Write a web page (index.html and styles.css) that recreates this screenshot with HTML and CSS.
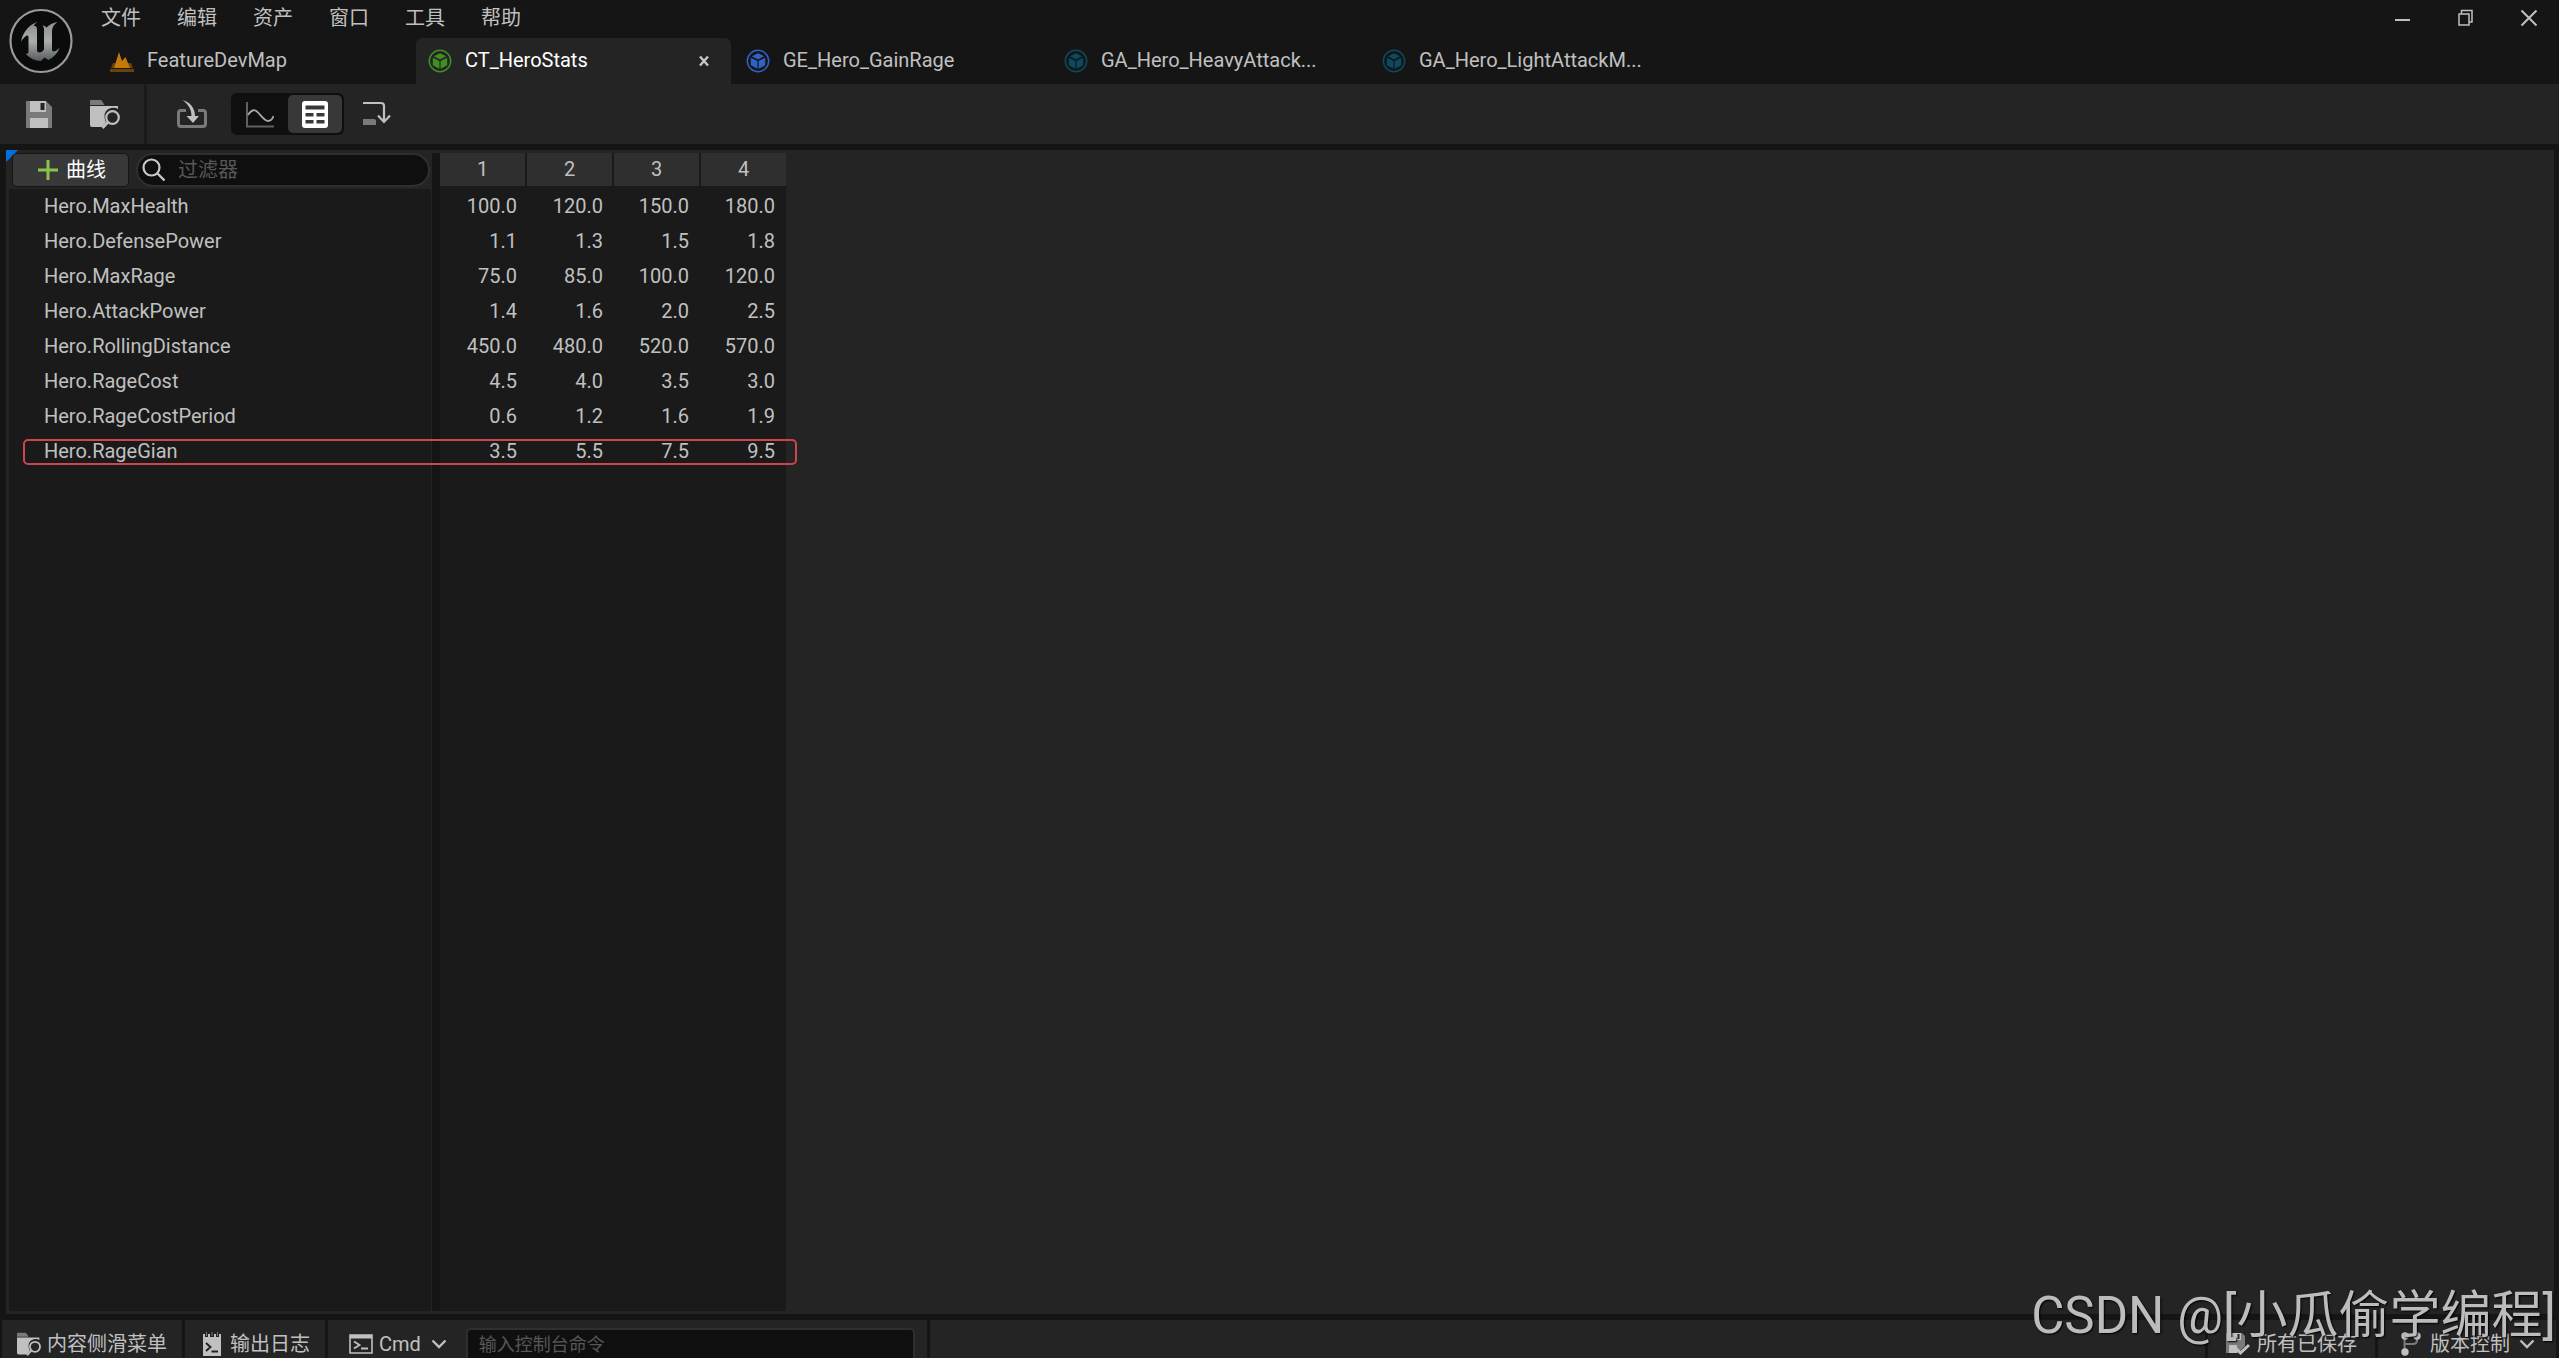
FILE: index.html
```html
<!DOCTYPE html>
<html lang="zh-CN">
<head>
<meta charset="utf-8">
<title>CT_HeroStats</title>
<link rel="stylesheet" href="styles.css">
</head>
<body>
<svg class="defs" width="0" height="0" aria-hidden="true">
  <symbol id="asset" viewBox="0 0 24 24">
    <circle cx="12" cy="12" r="10.7" fill="none" stroke="currentColor" stroke-width="1.5"/>
    <path fill="currentColor" d="M12 4.2 18.200 7.2 12 10.400 5.800 7.2zM4.800 8.7 11.400 12V19.800L4.800 16.300zM19.200 8.7 12.600 12V19.800L19.200 16.300z"/>
  </symbol>
  <symbol id="folder" viewBox="0 0 30 30">
    <path fill="#7a7a7a" d="M0 6V2Q0 1 1 1H10.500Q11.500 1 12 2L14.500 6z"/>
    <path fill="#c0c0c0" d="M0 7H28V10Q25 8 21 9Q14 11 14.500 18Q14.700 21 16 23L12 28H2Q0 28 0 26z"/>
    <circle cx="22.500" cy="18.500" r="6.300" fill="none" stroke="#c0c0c0" stroke-width="2.200"/>
    <path stroke="#c0c0c0" stroke-width="2.600" d="M18 23 12.500 29"/>
  </symbol>
  <symbol id="chevron" viewBox="0 0 16 10">
    <path fill="none" stroke="#c0c0c0" stroke-width="2.400" d="M1.500 1.500 8 8 14.500 1.500"/>
  </symbol>
</svg>

<div class="window">
  <header class="titlebar">
    <svg class="logo" viewBox="0 0 64 66" aria-label="Unreal Engine">
      <defs><linearGradient id="metal" x1="0" y1="0" x2="0" y2="1"><stop offset="0" stop-color="#8b8f90"/><stop offset=".5" stop-color="#a9adae"/><stop offset="1" stop-color="#555c5e"/></linearGradient></defs>
      <ellipse cx="32" cy="33" rx="30.500" ry="31" fill="#0b0b0b" stroke="#9a9a9a" stroke-width="2.200"/>
      <path fill="url(#metal)" d="M28.500 14C21 16 13.500 24 12 34C14 30 17 27.500 18.500 27.500Q19.500 27.500 19.500 29.500V44Q19.500 46.500 16.500 45.500C20 50 26 53 32 53L35.500 49.500 39.500 52C44 50 49 45 50.500 39.500C48.500 42 46 43.500 44.500 43.500Q43 43.500 43 41.500V23C43 19 45.500 16 48.500 14C44 14.500 40 17 37.500 19.500Q36 17.500 33.500 17.500Q35 19 35 21V41.500Q33 44.500 30.500 44.500Q28 44.500 28 42V21.500Q28 19.500 27 18.500Q25.500 17.500 24.500 18Q25.500 15.500 28.500 14z"/>
    </svg>
    <div class="title-main">
      <div class="menu-row">
        <nav class="menus">
          <button>文件</button><button>编辑</button><button>资产</button><button>窗口</button><button>工具</button><button>帮助</button>
        </nav>
        <div class="window-controls">
          <button aria-label="最小化"><svg width="18" height="18"><path stroke="#c0c0c0" stroke-width="2" d="M1 11H16"/></svg></button>
          <button aria-label="还原"><svg width="18" height="18"><path fill="none" stroke="#c0c0c0" stroke-width="1.500" d="M2 5H12V16H2zM4.500 5V1.500H15V13H12"/></svg></button>
          <button aria-label="关闭"><svg width="18" height="18"><path stroke="#c0c0c0" stroke-width="2" d="M1.500 1.500 16.500 16.500M16.500 1.500 1.500 16.500"/></svg></button>
        </div>
      </div>
      <div class="tabs" role="tablist">
        <button class="tab" role="tab"><svg class="tab-icon" viewBox="0 0 24 24"><path fill="#6b4208" d="M3 14 1 19H23L21 14zM0 20H24V23H0z"/><path fill="#c47a08" d="M4 19 9 3 12 12 15.500 8 20 19z"/></svg><span>FeatureDevMap</span></button>
        <button class="tab active" role="tab" aria-selected="true"><svg class="tab-icon green"><use href="#asset"/></svg><span>CT_HeroStats</span><svg class="tab-close" viewBox="0 0 10 12"><path stroke="#c8c8c8" stroke-width="2.400" d="M1 1.500 9 10.500M9 1.500 1 10.500"/></svg></button>
        <button class="tab" role="tab"><svg class="tab-icon blue"><use href="#asset"/></svg><span>GE_Hero_GainRage</span></button>
        <button class="tab" role="tab"><svg class="tab-icon teal"><use href="#asset"/></svg><span>GA_Hero_HeavyAttack...</span></button>
        <button class="tab" role="tab"><svg class="tab-icon teal"><use href="#asset"/></svg><span>GA_Hero_LightAttackM...</span></button>
      </div>
    </div>
  </header>

  <div class="toolbar">
    <div class="tool-group files">
      <button aria-label="保存"><svg width="26" height="28" viewBox="0 0 26 28"><path fill="#7a7a7a" d="M0 1H20L26 7V28H0z"/><path fill="#c0c0c0" d="M4 1H20V12H4z"/><path fill="#242424" d="M14.500 3H18.500V10H14.500z"/><path fill="#c0c0c0" d="M4 18H22V28H4z"/></svg></button>
      <button aria-label="浏览"><svg width="30" height="30"><use href="#folder"/></svg></button>
    </div>
    <div class="tool-group">
      <button aria-label="重新导入"><svg width="30" height="28" viewBox="0 0 30 28"><path fill="none" stroke="#7a7a7a" stroke-width="3" d="M9 10.500H4Q1.500 10.500 1.500 13V23.500Q1.500 26.500 4 26.500H26Q28.500 26.500 28.500 23.500V13Q28.500 10.500 26 10.500H21"/><path fill="#c0c0c0" d="M5.500 0C13 2 18 8 18 16H22L16 23 9.500 16H14.500C14.500 9 11 4 5.500 0z"/></svg></button>
      <div class="view-switch">
        <button aria-label="曲线视图"><svg width="28" height="27" viewBox="0 0 28 27"><path fill="none" stroke="#606060" stroke-width="2" d="M1 1V25.500H28"/><path fill="none" stroke="#a8a8a8" stroke-width="1.800" d="M2 14C6 8 9 8 12.500 12C17 17 19 20 22 20C25 20 26.500 18 27.500 15"/></svg></button>
        <button class="on" aria-label="表格视图"><svg width="26" height="27" viewBox="0 0 26 27"><path fill="#fff" fill-rule="evenodd" d="M3 0H23Q26 0 26 3V24Q26 27 23 27H3Q0 27 0 24V3Q0 0 3 0zM3.500 4.500V8.500H22.500V4.500zM3.500 12V15.500H11.500V12zM14.500 12V15.500H22.500V12zM3.500 19V22.500H11.500V19zM14.500 19V22.500H22.500V19z"/></svg></button>
      </div>
      <button aria-label="追加"><svg width="28" height="26" viewBox="0 0 28 26"><path fill="#7a7a7a" d="M0 18H11Q13 18 13 20V24H0z"/><path fill="none" stroke="#c0c0c0" stroke-width="2.200" d="M0 2H18Q21 2 21 5V21M15 14.500 21 21 27 14.500"/></svg></button>
    </div>
  </div>

  <main class="panel">
    <section class="curves">
      <div class="curve-tools">
        <button class="add"><svg width="20" height="20"><path stroke="#8bc34a" stroke-width="3" d="M10 0V20M0 10H20"/></svg>曲线</button>
        <label class="search"><svg width="24" height="24" viewBox="0 0 24 24"><circle cx="9.500" cy="9.500" r="8" fill="none" stroke="#c8c8c8" stroke-width="2.200"/><path stroke="#c8c8c8" stroke-width="2.400" d="M15 15 22.500 22.500"/></svg><input type="text" placeholder="过滤器" aria-label="过滤器"></label>
      </div>
      <ul class="names">
        <li>Hero.MaxHealth</li><li>Hero.DefensePower</li><li>Hero.MaxRage</li><li>Hero.AttackPower</li><li>Hero.RollingDistance</li><li>Hero.RageCost</li><li>Hero.RageCostPeriod</li><li>Hero.RageGian</li>
      </ul>
    </section>
    <div class="splitter"></div>
    <table class="values">
      <thead><tr><th>1</th><th>2</th><th>3</th><th>4</th></tr></thead>
      <tbody>
        <tr><td>100.0</td><td>120.0</td><td>150.0</td><td>180.0</td></tr>
        <tr><td>1.1</td><td>1.3</td><td>1.5</td><td>1.8</td></tr>
        <tr><td>75.0</td><td>85.0</td><td>100.0</td><td>120.0</td></tr>
        <tr><td>1.4</td><td>1.6</td><td>2.0</td><td>2.5</td></tr>
        <tr><td>450.0</td><td>480.0</td><td>520.0</td><td>570.0</td></tr>
        <tr><td>4.5</td><td>4.0</td><td>3.5</td><td>3.0</td></tr>
        <tr><td>0.6</td><td>1.2</td><td>1.6</td><td>1.9</td></tr>
        <tr><td>3.5</td><td>5.5</td><td>7.5</td><td>9.5</td></tr>
      </tbody>
    </table>
    <div class="corner"></div>
    <div class="highlight"></div>
  </main>

  <footer class="statusbar">
    <button class="cell drawer"><svg width="24" height="24"><use href="#folder"/></svg>内容侧滑菜单</button>
    <button class="cell log"><svg width="18" height="24" viewBox="0 0 18 24"><path fill="#c0c0c0" d="M0 2H2V5H5V2H7V5H11V2H13V5H16V2H18V24H0z"/><path fill="#7a7a7a" d="M3 0H4V4H3zM8.500 0H9.500V4H8.500zM14 0H15V4H14z"/><path fill="none" stroke="#242424" stroke-width="2" d="M3 11 7.500 15 3 19M8.500 19.500H15"/></svg>输出日志</button>
    <div class="cell console">
      <button><svg width="24" height="20" viewBox="0 0 24 20"><path fill="none" stroke="#c0c0c0" stroke-width="1.600" d="M1 1H23V19H1z"/><path fill="#c0c0c0" d="M1 1H23V4.500H1z"/><path fill="none" stroke="#c0c0c0" stroke-width="1.800" d="M5 7.500 10.500 11 5 14.500M12 14.500H19"/></svg>Cmd<svg class="drop" width="16" height="10"><use href="#chevron"/></svg></button>
      <input type="text" placeholder="输入控制台命令" aria-label="输入控制台命令">
    </div>
    <div class="cell fill"></div>
    <button class="cell saved"><svg width="24" height="24" viewBox="0 0 24 24"><path fill="#7a7a7a" d="M0 1H16L19 4V14L12 21H0z"/><path fill="#c0c0c0" d="M3 1H15V8H3zM3 13H11V21H3z"/><path fill="#242424" d="M11.500 2H13.500V7H11.500z"/><path fill="none" stroke="#c0c0c0" stroke-width="3" d="M10 16.500 14.500 21 23 13"/></svg>所有已保存</button>
    <button class="cell source"><svg width="20" height="24" viewBox="0 0 20 24"><path fill="none" stroke="#7a7a7a" stroke-width="2" d="M3.500 4V20M16 4V8Q16 12 12 12H3.500"/><circle cx="4" cy="4" r="3.700" fill="#c0c0c0"/><circle cx="16" cy="4" r="3.700" fill="#c0c0c0"/><circle cx="4" cy="20" r="3.700" fill="#c0c0c0"/></svg>版本控制<svg width="16" height="10"><use href="#chevron"/></svg></button>
  </footer>
  <div class="watermark">CSDN @[小瓜偷学编程]</div>
</div>
</body>
</html>
```
FILE: styles.css
```css
* { box-sizing: border-box; }
body {
  margin: 0;
  background: #151515;
  color: #c0c0c0;
  font: 20px/24px Roboto, "Noto Sans CJK SC", sans-serif;
}
button {
  display: flex;
  align-items: center;
  padding: 0;
  border: 0;
  background: none;
  color: inherit;
  font: inherit;
}
svg { display: block; flex: none; }
.defs { position: absolute; }
input {
  min-width: 0;
  border: 0;
  outline: 0;
  background: none;
  color: #c0c0c0;
  font: inherit;
}
input::placeholder { color: #575757; opacity: 1; }

.window {
  position: relative;
  display: flex;
  flex-direction: column;
  height: 100vh;
  overflow: hidden;
}

/* Title bar */
.titlebar { display: flex; height: 84px; flex: none; }
.logo { width: 64px; height: 66px; margin: 8px 25px 0 9px; }
.title-main { flex: 1; }
.menu-row { display: flex; justify-content: space-between; height: 38px; }
.menus { display: flex; align-items: center; gap: 36px; height: 36px; padding-left: 3px; }
.window-controls { display: flex; align-items: center; gap: 45px; height: 36px; padding-right: 21px; }
.tabs { display: flex; gap: 3px; }
.tab {
  width: 315px;
  height: 46px;
  padding: 0 22px 0 12px;
  border-radius: 6px 6px 0 0;
  text-align: left;
}
.tab span { flex: 1; padding-bottom: 2px; }
.tab.active { background: #242424; color: #fff; }
.tab-icon { width: 24px; height: 24px; margin-right: 13px; }
.tab-close { width: 10px; height: 12px; }
.green { color: #3f8f24; }
.blue { color: #2f62c4; }
.teal { color: #0b4a60; }

/* Toolbar */
.toolbar { display: flex; height: 60px; flex: none; background: #242424; }
.tool-group { display: flex; align-items: center; padding-left: 30px; }
.files {
  gap: 38px;
  padding: 0 24px 0 26px;
  border-right: 3px solid #1a1a1a;
}
.view-switch {
  display: flex;
  width: 113px;
  height: 42px;
  margin: 0 19px 0 24px;
  padding: 2px;
  border-radius: 6px;
  background: #0f0f0f;
}
.view-switch button { flex: 1; justify-content: center; border-radius: 5px; }
.view-switch .on { background: #383838; }

/* Curve table */
.panel {
  position: relative;
  display: flex;
  flex: 1;
  min-height: 0;
  margin: 6px 5px 6px 6px;
  padding: 3px;
  background: #242424;
}
.curves { display: flex; flex-direction: column; width: 422px; margin-right: 1px; }
.curve-tools { display: flex; gap: 7px; height: 36px; padding: 0 1px 0 3px; }
.add {
  flex: none;
  gap: 8px;
  width: 117px;
  height: 34px;
  padding-left: 25px;
  border: 1px solid #151515;
  border-radius: 5px;
  background: #383838;
  color: #fff;
}
.search {
  display: flex;
  align-items: center;
  flex: 1;
  min-width: 0;
  height: 34px;
  padding-left: 4px;
  border: 2px solid #2f2f2f;
  border-radius: 17px;
  background: #0f0f0f;
}
.search input { flex: 1; padding: 0 12px; height: 28px; }
.names { flex: 1; margin: 0; padding: 0 0 0 35px; list-style: none; background: #1a1a1a; }
.names li { height: 35px; line-height: 35px; }
.splitter { width: 8px; background: #151515; }
.values { display: flex; flex-direction: column; width: 346px; background: #1a1a1a; }
.values tr { display: flex; }
.values thead { display: block; margin-bottom: 3px; }
.values thead tr { gap: 2px; }
.values th {
  flex: 1;
  padding: 0;
  background: #2f2f2f;
  font-weight: 400;
  line-height: 33px;
}
.values tbody { display: block; }
.values td {
  width: 86px;
  height: 35px;
  padding: 0 9px 0 0;
  line-height: 35px;
  text-align: right;
}
.corner {
  position: absolute;
  top: 0;
  left: 0;
  width: 12px;
  height: 12px;
  background: #0070e0;
  clip-path: polygon(0 0, 100% 0, 0 100%);
}
.highlight {
  position: absolute;
  top: 289px;
  left: 17px;
  width: 774px;
  height: 26px;
  border: 2px solid #d0444f;
  border-radius: 5px;
}

/* Status bar */
.statusbar { display: flex; gap: 3px; height: 38px; flex: none; padding: 0 3px 0 2px; }
.cell {
  display: flex;
  height: 48px;
  padding-left: 15px;
  background: #242424;
}
.drawer { gap: 6px; width: 180px; }
.log { gap: 9px; width: 140px; padding-left: 18px; }
.console { width: 599px; padding-left: 21px; gap: 19px; }
.console button { gap: 6px; }
.console .drop { margin-left: 4px; }
.console input {
  width: 449px;
  height: 34px;
  margin-top: 8px;
  padding: 0 11px 2px;
  border: 2px solid #2f2f2f;
  border-radius: 5px;
  background: #0f0f0f;
  font-size: 18px;
}
.fill { flex: 1; }
.saved { gap: 7px; width: 167px; padding-left: 18px; }
.source { gap: 9px; width: 178px; padding-left: 23px; }

.watermark {
  position: absolute;
  right: 3px;
  bottom: 12px;
  color: #bcbcbc;
  font-size: 51px;
  line-height: 60px;
  text-shadow: 1px 1px 2px #000;
}
```
